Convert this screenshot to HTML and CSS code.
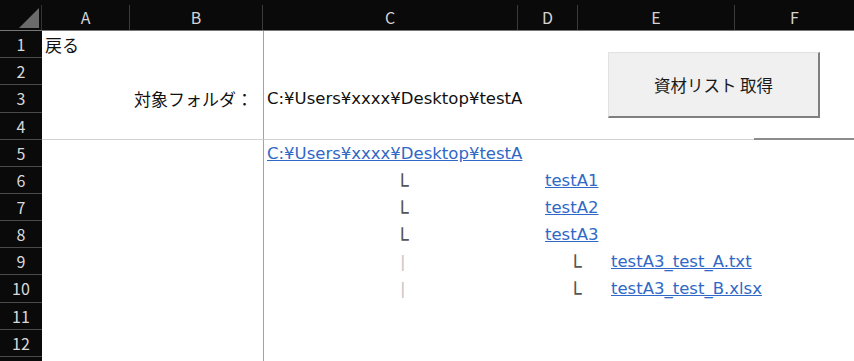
FILE: index.html
```html
<!DOCTYPE html>
<html lang="ja">
<head>
    <meta charset="UTF-8">
    <title>資材リスト</title>
    <link rel="stylesheet" href="styles.css">
</head>
<body>
    <div class="sheet">
        <div class="row head">
            <div class="corner">
                <svg width="41" height="25" viewBox="0 0 41 25"><polygon points="19,23 39,23 39,3" fill="#6b6b6b"/></svg>
            </div>
            <div class="col a">A</div>
            <div class="col b">B</div>
            <div class="col c">C</div>
            <div class="col d">D</div>
            <div class="col e">E</div>
            <div class="col f">F</div>
        </div>

        <div class="row">
            <div class="num">1</div>
            <div class="cell a jp">戻る</div>
            <div class="cell b"></div>
            <div class="cell c"></div>
            <div class="cell d"></div>
            <div class="cell e"></div>
            <div class="cell f"></div>
        </div>
        <div class="row">
            <div class="num">2</div>
            <div class="cell a"></div>
            <div class="cell b"></div>
            <div class="cell c"></div>
            <div class="cell d"></div>
            <div class="cell e"></div>
            <div class="cell f"></div>
        </div>
        <div class="row tall">
            <div class="num">3</div>
            <div class="cell a"></div>
            <div class="cell b right jp">対象フォルダ：</div>
            <div class="cell c">C:¥Users¥xxxx¥Desktop¥testA</div>
            <div class="cell d"></div>
            <div class="cell e"></div>
            <div class="cell f"></div>
        </div>
        <div class="row ruled">
            <div class="num">4</div>
            <div class="cell a"></div>
            <div class="cell b"></div>
            <div class="cell c"></div>
            <div class="cell d"></div>
            <div class="cell e"></div>
            <div class="cell f shadow"></div>
        </div>
        <div class="row">
            <div class="num">5</div>
            <div class="cell a"></div>
            <div class="cell b"></div>
            <div class="cell c"><a href="#">C:¥Users¥xxxx¥Desktop¥testA</a></div>
            <div class="cell d"></div>
            <div class="cell e"></div>
            <div class="cell f"></div>
        </div>
        <div class="row">
            <div class="num">6</div>
            <div class="cell a"></div>
            <div class="cell b"></div>
            <div class="cell c branch"><span class="mark">└</span></div>
            <div class="cell d dir"><a href="#">testA1</a></div>
            <div class="cell e"></div>
            <div class="cell f"></div>
        </div>
        <div class="row">
            <div class="num">7</div>
            <div class="cell a"></div>
            <div class="cell b"></div>
            <div class="cell c branch"><span class="mark">└</span></div>
            <div class="cell d dir"><a href="#">testA2</a></div>
            <div class="cell e"></div>
            <div class="cell f"></div>
        </div>
        <div class="row">
            <div class="num">8</div>
            <div class="cell a"></div>
            <div class="cell b"></div>
            <div class="cell c branch"><span class="mark">└</span></div>
            <div class="cell d dir"><a href="#">testA3</a></div>
            <div class="cell e"></div>
            <div class="cell f"></div>
        </div>
        <div class="row">
            <div class="num">9</div>
            <div class="cell a"></div>
            <div class="cell b"></div>
            <div class="cell c trunk"><span class="pipe">|</span></div>
            <div class="cell d sub"><span class="mark">└</span></div>
            <div class="cell e file"><a href="#">testA3_test_A.txt</a></div>
            <div class="cell f"></div>
        </div>
        <div class="row tall">
            <div class="num">10</div>
            <div class="cell a"></div>
            <div class="cell b"></div>
            <div class="cell c trunk"><span class="pipe">|</span></div>
            <div class="cell d sub"><span class="mark">└</span></div>
            <div class="cell e file"><a href="#">testA3_test_B.xlsx</a></div>
            <div class="cell f"></div>
        </div>
        <div class="row">
            <div class="num">11</div>
            <div class="cell a"></div>
            <div class="cell b"></div>
            <div class="cell c"></div>
            <div class="cell d"></div>
            <div class="cell e"></div>
            <div class="cell f"></div>
        </div>
        <div class="row">
            <div class="num">12</div>
            <div class="cell a"></div>
            <div class="cell b"></div>
            <div class="cell c"></div>
            <div class="cell d"></div>
            <div class="cell e"></div>
            <div class="cell f"></div>
        </div>
        <div class="row last">
            <div class="num"></div>
            <div class="cell a"></div>
            <div class="cell b"></div>
            <div class="cell c"></div>
            <div class="cell d"></div>
            <div class="cell e"></div>
            <div class="cell f"></div>
        </div>

        <button class="fetch" type="button">資材リスト 取得</button>
    </div>
</body>
</html>
```

FILE: styles.css
```css
body {
    margin: 0;
    background-color: #ffffff;
    font-family: "DejaVu Sans", "Noto Sans CJK JP", sans-serif;
    font-size: 16.5px;
    color: #111111;
    overflow: hidden;
}
.sheet {
    position: relative;
    width: 854px;
    height: 361px;
    overflow: hidden;
}
.row {
    display: flex;
    height: 27px;
}
.row.tall {
    height: 28px;
}
.row.head {
    height: 31px;
    box-sizing: border-box;
    padding-top: 5px;
    background-color: #0a0a0a;
    border-bottom: 1px solid #767676;
}
.corner {
    width: 42px;
    flex: none;
    box-sizing: border-box;
    border-right: 1px solid #333333;
}
.corner svg {
    display: block;
}
.col {
    flex: none;
    box-sizing: border-box;
    border-right: 1px solid #3a3a3a;
    color: #d4d4d4;
    font-family: "Noto Sans CJK JP", sans-serif;
    font-size: 16px;
    line-height: 25px;
    text-align: center;
}
.a { width: 88px; }
.b { width: 133px; }
.c { width: 255px; }
.d { width: 60px; }
.e { width: 157px; }
.f { width: 119px; }
.col.f {
    border-right: none;
}
.num {
    width: 42px;
    flex: none;
    box-sizing: border-box;
    background-color: #0a0a0a;
    border-bottom: 1px solid #4a4a4a;
    color: #d9d9d9;
    font-family: "Noto Sans CJK JP", sans-serif;
    font-size: 16px;
    line-height: 26px;
    text-align: center;
}
.cell {
    flex: none;
    box-sizing: border-box;
    padding-left: 3px;
    line-height: 27px;
    white-space: nowrap;
    overflow: visible;
}
.cell.c {
    border-left: 1px solid #a3a3a3;
}
.cell.right {
    text-align: right;
    padding-right: 10px;
}
.jp {
    font-family: "Noto Sans CJK JP", sans-serif;
    font-size: 17px;
}
.row.ruled .cell {
    border-bottom: 1px solid #d2d2d2;
}
.cell.shadow {
    position: relative;
}
.cell.shadow::after {
    content: "";
    position: absolute;
    left: 19px;
    right: 0;
    bottom: -1px;
    height: 2px;
    background-color: #8c8c8c;
}
a {
    color: #2f68c6;
    text-decoration: underline;
}
.branch {
    padding-left: 132px;
}
.trunk {
    padding-left: 136px;
}
.dir {
    padding-left: 27px;
}
.sub {
    padding-left: 51px;
}
.file {
    padding-left: 33px;
}
.mark {
    font-family: "DejaVu Sans", sans-serif;
    font-size: 21px;
    line-height: 1;
    vertical-align: -7px;
    color: #555555;
}
.pipe {
    color: #c4c4c4;
}
.fetch {
    position: absolute;
    left: 608px;
    top: 52px;
    width: 212px;
    height: 66px;
    background-color: #f0f0f0;
    border: 1px solid #e2e2e2;
    border-right: 2px solid #808080;
    border-bottom: 2px solid #808080;
    font-family: "Noto Sans CJK JP", sans-serif;
    font-size: 16.5px;
    color: #1a1a1a;
    padding: 0;
}
```
